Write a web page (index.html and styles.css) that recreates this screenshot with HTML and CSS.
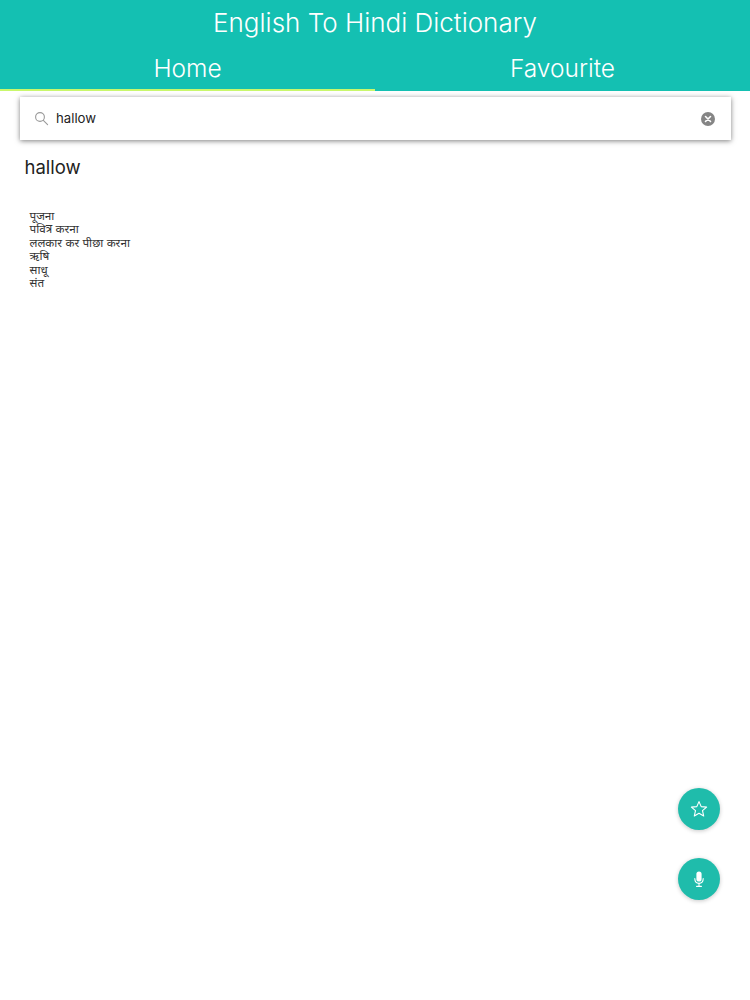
FILE: index.html
```html
<!DOCTYPE html>
<html lang="hi">
<head>
    <meta charset="UTF-8">
    <meta name="viewport" content="width=device-width, initial-scale=1.0">
    <title>English To Hindi Dictionary</title>
    <link rel="stylesheet" href="styles.css">
</head>
<body>
    <header class="app-header">
        <h1 class="app-title">English To Hindi Dictionary</h1>
        <nav class="tabs">
            <a class="tab tab-active" href="#">Home</a>
            <a class="tab" href="#">Favourite</a>
        </nav>
    </header>

    <main>
        <div class="search-bar">
            <svg class="search-icon" width="16" height="16" viewBox="0 0 16 16" fill="none" stroke="#9a9a9a" stroke-width="1.1">
                <circle cx="6" cy="6" r="4.4"/>
                <path d="M9.3 9.3 L13.6 13.6" stroke-linecap="round"/>
            </svg>
            <span class="search-text">hallow</span>
            <svg class="clear-icon" width="14" height="14" viewBox="0 0 14 14">
                <circle cx="7" cy="7" r="7" fill="#858585"/>
                <path d="M4.5 4.5 L9.5 9.5 M9.5 4.5 L4.5 9.5" stroke="#fff" stroke-width="1.6" stroke-linecap="round"/>
            </svg>
        </div>

        <h2 class="word">hallow</h2>
        <ul class="meanings">
            <li>पूजना</li>
            <li>पवित्र करना</li>
            <li>ललकार कर पीछा करना</li>
            <li>ऋषि</li>
            <li>साधू</li>
            <li>संत</li>
        </ul>
    </main>

    <button class="fab fab-star" type="button" aria-label="Favourite">
        <svg width="18" height="18" viewBox="0 0 18 18" fill="none" stroke="#fff" stroke-width="1.1" stroke-linejoin="round">
            <path d="M9 1.6 L11.2 6.6 L16.6 7.1 L12.5 10.7 L13.7 16 L9 13.2 L4.3 16 L5.5 10.7 L1.4 7.1 L6.8 6.6 Z"/>
        </svg>
    </button>
    <button class="fab fab-mic" type="button" aria-label="Voice search">
        <svg width="18" height="18" viewBox="0 0 18 18" fill="none" stroke="#fff" stroke-width="1.1" stroke-linecap="round">
            <rect x="6.4" y="1.5" width="5.2" height="10" rx="2.6" fill="#fff" stroke="none"/>
            <path d="M4.8 8.6 C4.8 15 13.2 15 13.2 8.6"/>
            <path d="M9 13.4 V16.2 M6.6 16.4 H11.4"/>
        </svg>
    </button>
</body>
</html>
```

FILE: styles.css
```css
body {
    font-family: Inter, "Noto Sans", sans-serif;
    margin: 0;
    padding: 0;
    background-color: #fff;
    color: #222;
    height: 1000px;
    overflow: hidden;
}

.app-header {
    background-color: #14c0b2;
    color: #fff;
}

.app-title {
    margin: 0;
    height: 45px;
    line-height: 45px;
    font-size: 26px;
    font-weight: 300;
    text-align: center;
}

.tabs {
    display: flex;
    height: 46px;
}

.tab {
    flex: 1;
    box-sizing: border-box;
    line-height: 47px;
    font-size: 24.5px;
    font-weight: 300;
    text-align: center;
    color: #fff;
    text-decoration: none;
    border-bottom: 2px solid transparent;
}

.tab-active {
    border-bottom-color: #c9f76c;
}

main {
    padding: 6px 19px 0 20px;
}

.search-bar {
    display: flex;
    align-items: center;
    height: 43px;
    padding: 0 16px 0 14px;
    background-color: #fff;
    box-shadow: 0 1px 5px rgba(0, 0, 0, 0.5);
}

.search-icon {
    margin-right: 6px;
}

.search-text {
    flex: 1;
    font-size: 13.2px;
    padding-bottom: 2px;
}

.word {
    margin: 15px 0 0 4.5px;
    font-size: 18.5px;
    line-height: 24px;
    font-weight: 400;
}

.meanings {
    list-style-type: none;
    margin: 31px 0 0 9.5px;
    padding: 0;
    font-size: 11.7px;
    line-height: 13.4px;
    color: #333;
}

.fab {
    position: fixed;
    left: 678px;
    width: 42px;
    height: 42px;
    padding: 0;
    border: none;
    border-radius: 50%;
    background-color: #1fbcab;
    box-shadow: 0 1px 4px rgba(0, 0, 0, 0.22);
    display: flex;
    align-items: center;
    justify-content: center;
}

.fab-star {
    top: 788px;
}

.fab-mic {
    top: 858px;
}
```
